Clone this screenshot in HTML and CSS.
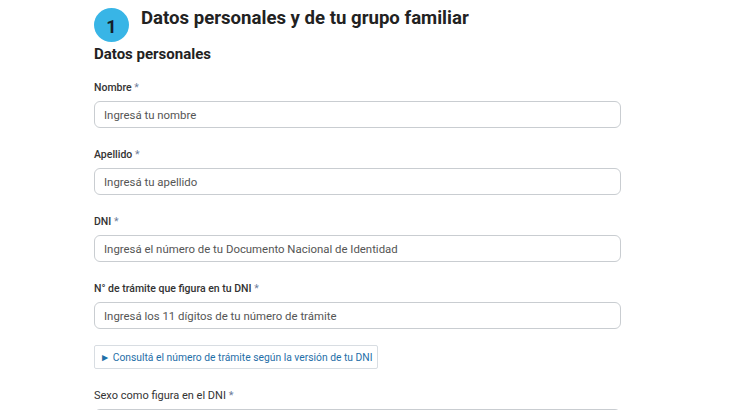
FILE: index.html
```html
<!DOCTYPE html>
<html lang="es">
  <head>
    <meta charset="UTF-8" />
    <meta name="viewport" content="width=device-width, initial-scale=1.0" />
    <title>Datos personales</title>
    <link rel="stylesheet" href="styles.css">
  </head>
  <body>
    <div class="form-wrap">
      <!-- Paso 1 -->
      <div class="step-header">
        <span class="step-num">1</span>
        <h1>Datos personales y de tu grupo familiar</h1>
      </div>
      <h2>Datos personales</h2>

      <div class="field first">
        <label>Nombre <span class="req">*</span></label>
        <input type="text" placeholder="Ingresá tu nombre" />
      </div>

      <div class="field">
        <label>Apellido <span class="req">*</span></label>
        <input type="text" placeholder="Ingresá tu apellido" />
      </div>

      <div class="field">
        <label>DNI <span class="req">*</span></label>
        <input type="text" placeholder="Ingresá el número de tu Documento Nacional de Identidad" />
      </div>

      <div class="field">
        <label>N° de trámite que figura en tu DNI <span class="req">*</span></label>
        <input type="text" placeholder="Ingresá los 11 dígitos de tu número de trámite" />
      </div>

      <button class="help-btn">&#9658; Consultá el número de trámite según la versión de tu DNI</button>

      <div class="field">
        <label class="plain">Sexo como figura en el DNI <span class="req">*</span></label>
        <input type="text" />
      </div>
    </div>
  </body>
</html>
```

FILE: styles.css
```css
* {
  margin: 0;
  padding: 0;
  box-sizing: border-box;
  font-family: Roboto, "Liberation Sans", sans-serif;
}

body {
  background: #fff;
  color: #2b2b2b;
}

.form-wrap {
  width: 621px;
  padding: 8px 0 0 94px;
}

.step-header {
  display: flex;
  align-items: flex-start;
  gap: 12px;
}

.step-num {
  width: 35px;
  height: 34px;
  border-radius: 50%;
  background: #38b5e6;
  color: #14202a;
  font-size: 18px;
  font-weight: 700;
  display: flex;
  align-items: center;
  justify-content: center;
  padding-top: 3px;
}

h1 {
  font-size: 18.6px;
  font-weight: 700;
  color: #222;
  line-height: 20px;
}

h2 {
  font-size: 15px;
  font-weight: 700;
  color: #222;
  margin-top: 2px;
  line-height: 20px;
}

.field {
  margin-top: 20px;
}

.field.first {
  margin-top: 17px;
}

.field label {
  display: block;
  font-size: 10.5px;
  font-weight: 500;
  color: #333;
  line-height: 14px;
  margin-bottom: 6px;
}

.field label.plain {
  font-weight: 400;
  font-size: 11px;
}

.req {
  color: #6d7d9a;
  font-weight: 400;
}

input[type="text"] {
  width: 100%;
  height: 27px;
  border: 1px solid #c9cdd1;
  border-radius: 6px;
  padding: 0 9px;
  font-size: 11.4px;
  color: #444;
  outline: none;
}

input[type="text"]::placeholder {
  color: #555;
}

.help-btn {
  display: block;
  margin-top: 16px;
  height: 24px;
  padding: 0 5px;
  background: #fff;
  border: 1px solid #d8dde2;
  border-radius: 2px;
  color: #1f6fa8;
  font-size: 10.3px;
  cursor: pointer;
}
```
